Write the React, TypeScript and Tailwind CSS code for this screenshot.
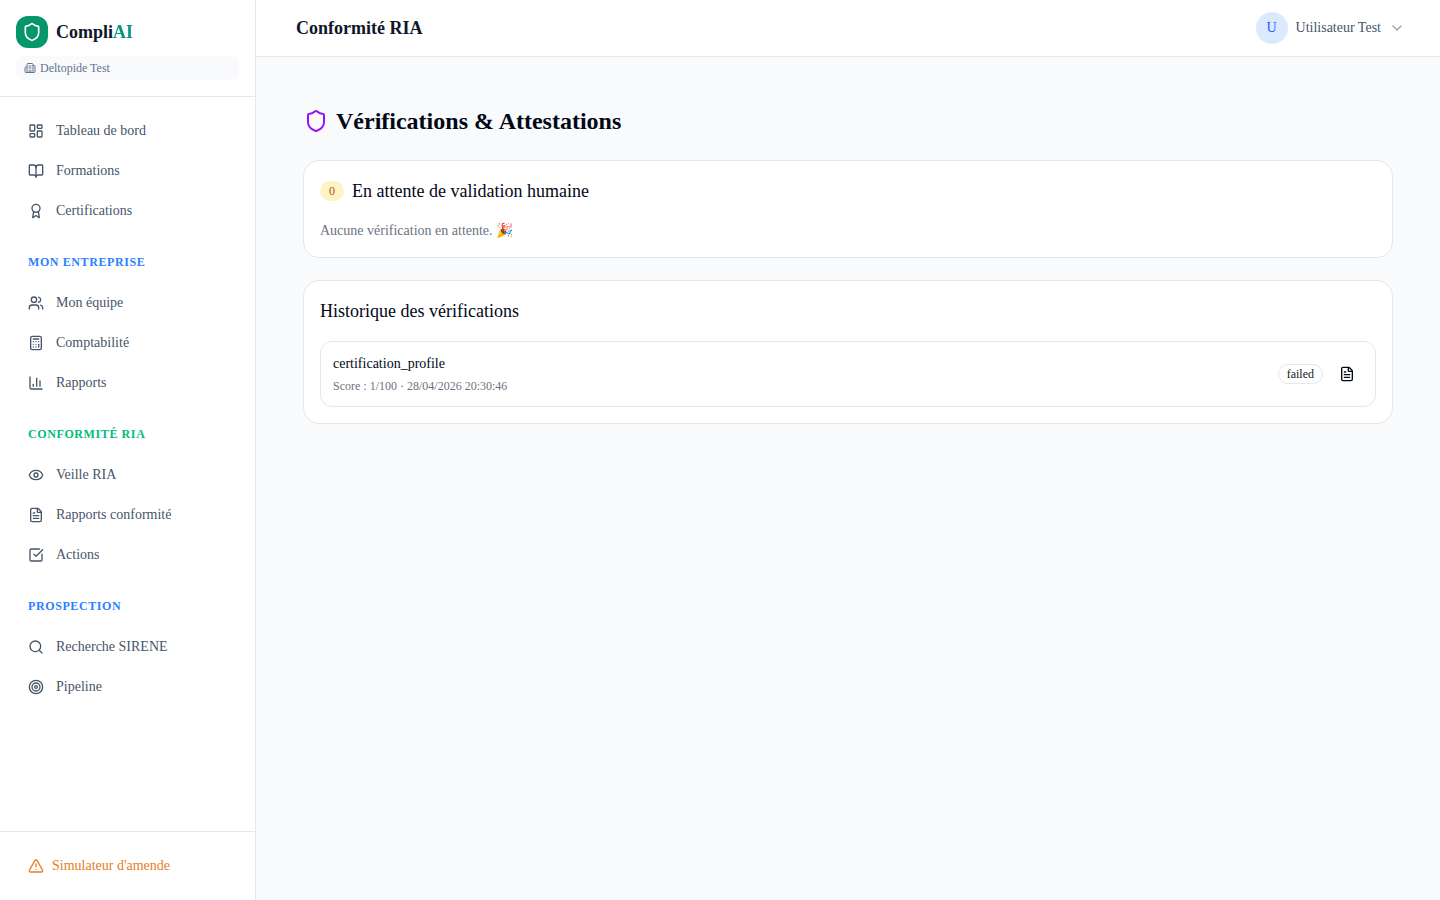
import {
  Award,
  BookOpen,
  Building2,
  Calculator,
  ChartColumn,
  ChevronDown,
  Eye,
  FileText,
  LayoutDashboard,
  Search,
  Shield,
  SquareCheckBig,
  Target,
  TriangleAlert,
  Users,
} from "lucide-react";
import type { LucideIcon } from "lucide-react";

function NavItem({ icon: Icon, label }: { icon: LucideIcon; label: string }) {
  return (
    <a className="flex h-10 items-center gap-3 rounded-lg px-4 text-sm text-[#475569]">
      <Icon size={16} className="shrink-0" />
      {label}
    </a>
  );
}

function SectionLabel({ label, color }: { label: string; color: string }) {
  return (
    <div className={`mt-[19px] mb-[9px] flex h-6 items-center px-4 text-xs font-bold tracking-wider ${color}`}>
      {label}
    </div>
  );
}

function Sidebar() {
  return (
    <aside className="flex h-screen w-64 shrink-0 flex-col border-r border-[#e2e8f0] bg-white">
      <div className="border-b border-[#e2e8f0] px-4 pt-4 pb-4">
        <div className="flex items-center gap-2">
          <div className="flex h-8 w-8 items-center justify-center rounded-xl bg-[#059669] text-white">
            <Shield size={20} />
          </div>
          <span className="text-lg font-bold text-[#0f172a]">
            Compli<span className="bg-gradient-to-r from-[#059669] to-[#0d9488] bg-clip-text text-transparent">AI</span>
          </span>
        </div>
        <div className="mt-2 flex h-6 items-center gap-1 rounded-lg bg-[#f8fafc] px-2 text-xs text-[#64748b]">
          <Building2 size={12} />
          Deltopide Test
        </div>
      </div>

      <nav className="flex flex-1 flex-col px-3 pt-3.5">
        <NavItem icon={LayoutDashboard} label="Tableau de bord" />
        <NavItem icon={BookOpen} label="Formations" />
        <NavItem icon={Award} label="Certifications" />

        <SectionLabel label="MON ENTREPRISE" color="text-blue-500" />
        <NavItem icon={Users} label="Mon équipe" />
        <NavItem icon={Calculator} label="Comptabilité" />
        <NavItem icon={ChartColumn} label="Rapports" />

        <SectionLabel label="CONFORMITÉ RIA" color="text-emerald-500" />
        <NavItem icon={Eye} label="Veille RIA" />
        <NavItem icon={FileText} label="Rapports conformité" />
        <NavItem icon={SquareCheckBig} label="Actions" />

        <SectionLabel label="PROSPECTION" color="text-blue-500" />
        <NavItem icon={Search} label="Recherche SIRENE" />
        <NavItem icon={Target} label="Pipeline" />
      </nav>

      <div className="flex h-[69px] items-center gap-2 border-t border-[#e2e8f0] px-7 text-sm text-[#e67e22]">
        <TriangleAlert size={16} className="shrink-0" />
        Simulateur d'amende
      </div>
    </aside>
  );
}

function Header() {
  return (
    <header className="flex h-[57px] items-center justify-between border-b border-[#e2e8f0] bg-white pr-[35px] pl-10">
      <h1 className="text-lg font-bold text-[#0f172a]">Conformité RIA</h1>
      <div className="flex items-center gap-2">
        <div className="flex h-8 w-8 items-center justify-center rounded-full bg-[#dbeafe] text-sm text-blue-600">U</div>
        <span className="text-sm text-[#475569]">Utilisateur Test</span>
        <ChevronDown size={16} className="text-[#94a3b8]" />
      </div>
    </header>
  );
}

export default function App() {
  return (
    <div className="flex h-screen bg-[#f8fafc] font-['Liberation_Serif',serif]">
      <Sidebar />
      <div className="flex min-w-0 flex-1 flex-col">
        <Header />
        <main className="flex flex-col gap-[22px] px-[47px] pt-[48px]">
          <div className="mb-px flex h-8 items-center gap-2 pl-px">
            <Shield size={24} className="text-purple-600" />
            <h2 className="text-2xl font-bold text-[#020817]">Vérifications &amp; Attestations</h2>
          </div>

          <section className="rounded-2xl border border-[#e5e7eb] bg-white p-4">
            <div className="flex items-center gap-2">
              <span className="flex h-5 w-6 items-center justify-center rounded-full bg-[#fef3c7] text-xs text-[#b45309]">0</span>
              <h3 className="text-lg text-[#020817]">En attente de validation humaine</h3>
            </div>
            <p className="mt-4 text-sm text-[#6b7280]">
              Aucune vérification en attente. 🎉
            </p>
          </section>

          <section className="rounded-2xl border border-[#e5e7eb] bg-white p-4">
            <h3 className="text-lg text-[#020817]">Historique des vérifications</h3>
            <div className="mt-4 flex items-center justify-between rounded-xl border border-[#e5e7eb] py-3 pr-5 pl-3">
              <div>
                <div className="text-sm text-[#020817]">certification_profile</div>
                <div className="mt-1 text-xs text-[#6b7280]">Score : 1/100 · 28/04/2026 20:30:46</div>
              </div>
              <div className="flex items-center gap-4">
                <span className="flex h-5 items-center rounded-full border border-[#e5e7eb] px-2 text-xs text-[#0f172a]">failed</span>
                <FileText size={16} className="text-[#020817]" />
              </div>
            </div>
          </section>
        </main>
      </div>
    </div>
  );
}
